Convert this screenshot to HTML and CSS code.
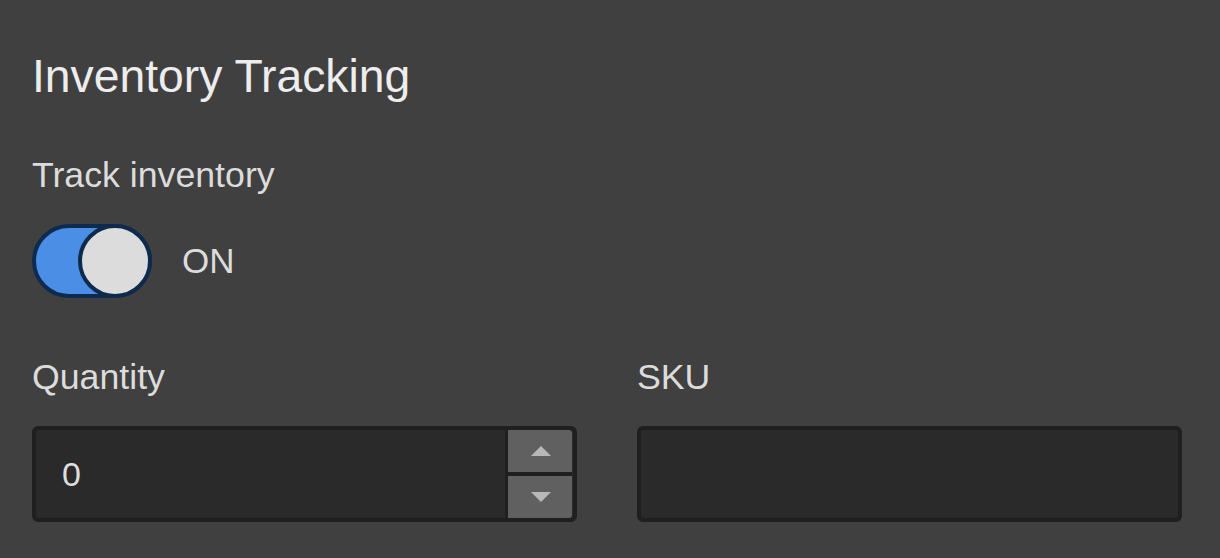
FILE: index.html
```html
<!DOCTYPE html>
<html lang="en">
<head>
<meta charset="utf-8">
<title>Inventory Tracking</title>
<link rel="stylesheet" href="styles.css">
</head>
<body>
<main class="panel">
  <h1 class="title">Inventory Tracking</h1>
  <div class="label">Track inventory</div>
  <div class="toggle-row">
    <span class="toggle"><span class="knob"></span></span>
    <span class="toggle-text">ON</span>
  </div>
  <div class="fields">
    <div class="field">
      <div class="label">Quantity</div>
      <div class="input number">
        <span class="value">0</span>
        <span class="spin">
          <span class="spin-btn up"><span class="tri-up"></span></span>
          <span class="spin-btn down"><span class="tri-down"></span></span>
        </span>
      </div>
    </div>
    <div class="field">
      <div class="label">SKU</div>
      <div class="input"></div>
    </div>
  </div>
</main>
</body>
</html>
```
FILE: styles.css
```css
html, body {
  margin: 0;
  padding: 0;
  background: #404040;
}
body {
  font-family: "Liberation Sans", Arial, Helvetica, sans-serif;
  color: #dedede;
}
.panel {
  padding: 48px 38px 0 32px;
}
.title {
  margin: 0;
  font-size: 46.3px;
  line-height: 56px;
  font-weight: 400;
  color: #ededed;
}
.label {
  font-size: 35.7px;
  line-height: 42px;
  color: #dcdcdc;
}
.panel > .label {
  margin-top: 50px;
}
.toggle-row {
  margin-top: 28px;
  display: flex;
  align-items: center;
  gap: 30px;
  height: 74px;
}
.toggle {
  box-sizing: border-box;
  width: 120px;
  height: 74px;
  border-radius: 37px;
  border: 4px solid #0e2a4d;
  background: #4a8ee6;
  display: flex;
  justify-content: flex-end;
  align-items: center;
}
.knob {
  box-sizing: border-box;
  width: 74px;
  height: 74px;
  margin: -4px;
  border-radius: 50%;
  border: 4px solid #0e2a4d;
  background: #dcdcdc;
  flex: none;
}
.toggle-text {
  font-size: 35px;
  line-height: 42px;
  color: #dcdcdc;
}
.fields {
  margin-top: 58px;
  display: grid;
  grid-template-columns: 1fr 1fr;
  column-gap: 60px;
}
.field .label {
  margin-bottom: 28px;
}
.input {
  box-sizing: border-box;
  height: 96px;
  border: 4px solid #1f1f1f;
  border-radius: 6px;
  background: #2a2a2a;
  display: flex;
  align-items: stretch;
}
.value {
  flex: 1;
  display: flex;
  align-items: center;
  padding-left: 26px;
  font-size: 34px;
  color: #dedede;
}
.spin {
  width: 64px;
  border-left: 3px solid #1f1f1f;
  background: #1f1f1f;
  display: flex;
  flex-direction: column;
  gap: 4px;
  margin-right: 1px;
}
.spin-btn {
  flex: 1;
  background: #606060;
  display: flex;
  align-items: center;
  justify-content: center;
}
.spin-btn.up {
  border-top-right-radius: 3px;
}
.spin-btn.down {
  border-bottom-right-radius: 3px;
}
.tri-up {
  width: 0;
  height: 0;
  border-left: 10px solid transparent;
  border-right: 10px solid transparent;
  border-bottom: 10px solid #b8b8b8;
  margin-left: 2px;
}
.tri-down {
  width: 0;
  height: 0;
  border-left: 10px solid transparent;
  border-right: 10px solid transparent;
  border-top: 10px solid #b8b8b8;
  margin-left: 2px;
}
```
